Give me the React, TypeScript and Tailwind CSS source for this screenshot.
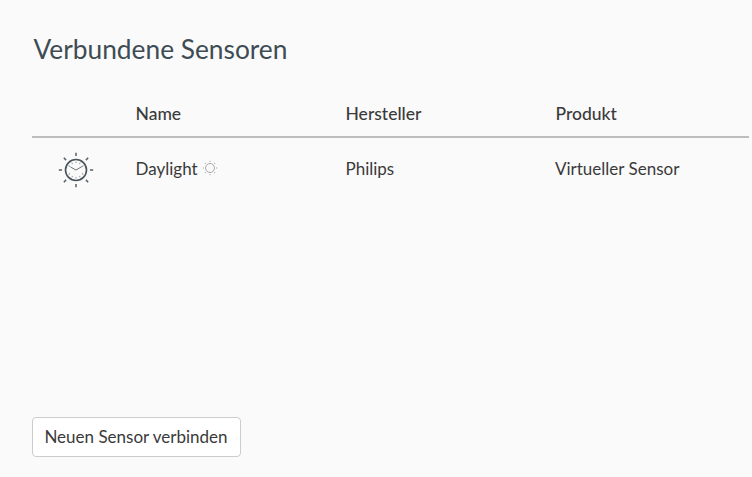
function ClockIcon() {
  const rays = [0, 45, 90, 135, 180, 225, 270, 315];
  return (
    <svg width="36" height="36" viewBox="0 0 36 36" fill="none">
      <circle cx="18" cy="18" r="10.5" stroke="#47525a" strokeWidth="1.6" />
      <path d="M18 18 L24 14.5 M18 18 L12.5 15" stroke="#6a747b" strokeWidth="1" />
      {[30, 60, 120, 150, 180, 210, 240, 300, 330, 0].map((a) => (
        <line key={a} x1="18" y1="9.5" x2="18" y2="11" stroke="#8b9298" strokeWidth="0.9" transform={`rotate(${a} 18 18)`} />
      ))}
      {rays.map((a) => (
        <line key={a} x1="18" y1="0.8" x2="18" y2="4" stroke="#56616a" strokeWidth="1.5" transform={`rotate(${a} 18 18)`} />
      ))}
    </svg>
  );
}

function SunIcon() {
  const rays = [0, 45, 90, 135, 180, 225, 270, 315];
  return (
    <svg width="16" height="16" viewBox="0 0 16 16" fill="none">
      <circle cx="8" cy="8" r="4.5" stroke="#a3a8ab" strokeWidth="1" />
      {rays.map((a) => (
        <line key={a} x1="8" y1="0.8" x2="8" y2="2" stroke="#a3a8ab" strokeWidth="1" transform={`rotate(${a} 8 8)`} />
      ))}
    </svg>
  );
}

export default function App() {
  return (
    <div className="flex h-[477px] w-[752px] flex-col overflow-hidden bg-[#fafafa] pl-8 pr-[3px] font-['Lato','Liberation_Sans',sans-serif] text-[#3a3a3a]">
      <h1 className="ml-[1.5px] mt-[33px] text-[26.3px] leading-[33px] text-[#3e4c54]">Verbundene Sensoren</h1>

      <div className="mt-[31px] grid h-[41px] grid-cols-[103.5px_210px_210px_1fr] items-center border-b-2 border-[#bdbdbd] pb-[5px] text-[17.5px] font-medium">
        <span />
        <span>Name</span>
        <span>Hersteller</span>
        <span>Produkt</span>
      </div>

      <div className="grid h-[62px] grid-cols-[103.5px_210px_210px_1fr] items-center text-[17px]">
        <div className="ml-[26px] mt-[2px] flex">
          <ClockIcon />
        </div>
        <div className="flex items-center gap-1">
          Daylight
          <span className="-mt-[2px]">
            <SunIcon />
          </span>
        </div>
        <span>Philips</span>
        <span className="-ml-[0.5px]">Virtueller Sensor</span>
      </div>

      <button
        type="button"
        className="mt-auto mb-5 h-10 w-[209px] rounded border border-[#ccc] bg-white pr-[1px] text-center text-[17px] text-[#3a3a3a]"
      >
        Neuen Sensor verbinden
      </button>
    </div>
  );
}
